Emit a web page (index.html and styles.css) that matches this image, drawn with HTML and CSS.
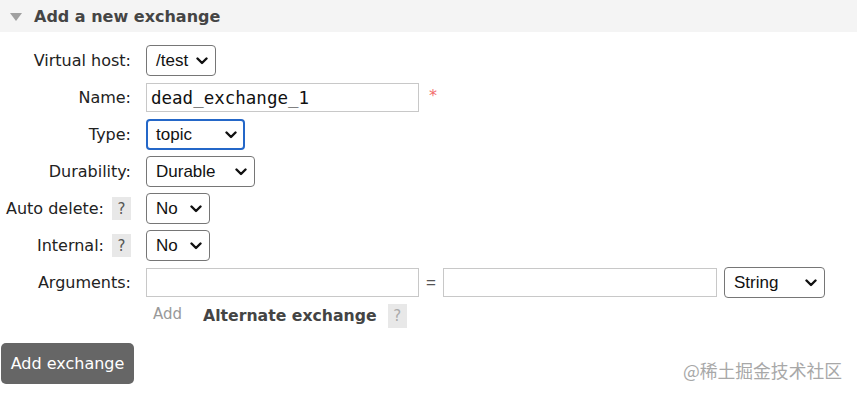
FILE: index.html
```html
<!DOCTYPE html>
<html lang="en">
<head>
  <meta charset="UTF-8" />
  <title>Add a new exchange</title>
  <meta name="viewport" content="width=device-width, initial-scale=1.0" />
  <link rel="stylesheet" href="styles.css">
</head>
<body>
  <div class="section">
    <h2 class="section-title"><span class="toggle"></span>Add a new exchange</h2>

    <form class="exchange-form">
      <div class="label">Virtual host:</div>
      <div class="control">
        <div class="select vhost">/test<svg class="chev" viewBox="0 0 12 8"><path d="M1.5 1.5 6 6l4.5-4.5" /></svg></div>
      </div>

      <div class="label">Name:</div>
      <div class="control">
        <input type="text" class="text-input name-input" value="dead_exchange_1" />
        <span class="required">*</span>
      </div>

      <div class="label">Type:</div>
      <div class="control">
        <div class="select type focused">topic<svg class="chev" viewBox="0 0 12 8"><path d="M1.5 1.5 6 6l4.5-4.5" /></svg></div>
      </div>

      <div class="label">Durability:</div>
      <div class="control">
        <div class="select durability">Durable<svg class="chev" viewBox="0 0 12 8"><path d="M1.5 1.5 6 6l4.5-4.5" /></svg></div>
      </div>

      <div class="label">Auto delete: <span class="help">?</span></div>
      <div class="control">
        <div class="select yesno">No<svg class="chev" viewBox="0 0 12 8"><path d="M1.5 1.5 6 6l4.5-4.5" /></svg></div>
      </div>

      <div class="label">Internal: <span class="help">?</span></div>
      <div class="control">
        <div class="select yesno">No<svg class="chev" viewBox="0 0 12 8"><path d="M1.5 1.5 6 6l4.5-4.5" /></svg></div>
      </div>

      <div class="label">Arguments:</div>
      <div class="control">
        <input type="text" class="text-input arg-input" />
        <span class="equals">=</span>
        <input type="text" class="text-input arg-input value" />
        <div class="select arg-type">String<svg class="chev" viewBox="0 0 12 8"><path d="M1.5 1.5 6 6l4.5-4.5" /></svg></div>
      </div>

      <div class="label"></div>
      <div class="control extras">
        <span class="add-link">Add</span>
        <span class="alt-exchange">Alternate exchange</span>
        <span class="help light">?</span>
      </div>
    </form>

    <button type="button" class="submit-btn">Add exchange</button>
  </div>

  <div class="watermark">@稀土掘金技术社区</div>
</body>
</html>
```

FILE: styles.css
```css
body {
  margin: 0;
  font-family: "DejaVu Sans", Verdana, sans-serif;
  color: #222;
  background: #fff;
  position: relative;
  height: 395px;
  overflow: hidden;
}

.section-title {
  margin: 0;
  height: 32px;
  display: flex;
  align-items: center;
  background: #f4f4f4;
  color: #454545;
  font-size: 16px;
  font-weight: bold;
  padding-left: 10px;
}
.toggle {
  width: 0;
  height: 0;
  border-left: 6px solid transparent;
  border-right: 6px solid transparent;
  border-top: 8px solid #a0a0a0;
  margin-right: 12px;
  margin-top: 1px;
}

.exchange-form {
  display: grid;
  grid-template-columns: 131px 1fr;
  column-gap: 15px;
  grid-auto-rows: 37px;
  align-items: center;
  padding-top: 10px;
}
.label {
  display: flex;
  justify-content: flex-end;
  align-items: center;
  gap: 8px;
  font-size: 16px;
  color: #222;
  white-space: nowrap;
}
.control {
  display: flex;
  align-items: center;
}

.help {
  display: inline-flex;
  align-items: center;
  justify-content: center;
  width: 19px;
  height: 23px;
  background: #e8e8e8;
  color: #555;
  font-size: 15px;
}
.help.light {
  color: #aaa;
  height: 24px;
}

.select {
  box-sizing: border-box;
  height: 31px;
  display: flex;
  align-items: center;
  justify-content: space-between;
  padding: 0 7px 0 9px;
  border: 1px solid #767676;
  border-radius: 4px;
  background: #fff;
  font-family: "Liberation Sans", Arial, sans-serif;
  font-size: 17px;
  color: #111;
}
.select.focused {
  border: 2px solid #2467c8;
  padding-left: 8px;
  padding-right: 6px;
}
.chev {
  width: 12px;
  height: 8px;
  fill: none;
  stroke: #111;
  stroke-width: 2.4;
  stroke-linecap: round;
  stroke-linejoin: round;
}
.vhost { width: 70px; }
.type { width: 99px; }
.durability { width: 109px; }
.yesno { width: 64px; }
.arg-type { width: 101px; margin-left: 7px; }

.text-input {
  box-sizing: border-box;
  height: 29px;
  border: 1px solid #c8c8c8;
  padding: 0 4px;
  outline: none;
  background: #fff;
}
.name-input {
  width: 273px;
  font-family: "DejaVu Sans Mono", monospace;
  font-size: 17.5px;
  color: #111;
}
.required {
  color: #f26d6d;
  font-size: 16px;
  margin-left: 10px;
  margin-top: -4px;
}
.arg-input { width: 273px; }
.arg-input.value { width: 274px; }
.equals {
  width: 24px;
  text-align: center;
  color: #555;
  font-family: "Liberation Sans", Arial, sans-serif;
  font-size: 17px;
}

.extras {
  padding-left: 7px;
  margin-top: -8px;
}
.add-link {
  color: #999;
  font-size: 15px;
  margin-top: -3px;
}
.alt-exchange {
  margin-left: 21px;
  font-weight: bold;
  color: #444;
  font-size: 15.7px;
  margin-right: 11px;
}

.submit-btn {
  display: block;
  margin: 5px 0 0 1px;
  width: 133px;
  height: 41px;
  border: none;
  border-radius: 5px;
  background: #666;
  color: #fff;
  font-family: "DejaVu Sans", Verdana, sans-serif;
  font-size: 16px;
  padding: 0;
  cursor: pointer;
}

.watermark {
  position: absolute;
  right: 15px;
  top: 357px;
  color: #a8a8a8;
  font-family: "Noto Sans CJK SC", sans-serif;
  font-size: 17.8px;
}
```
